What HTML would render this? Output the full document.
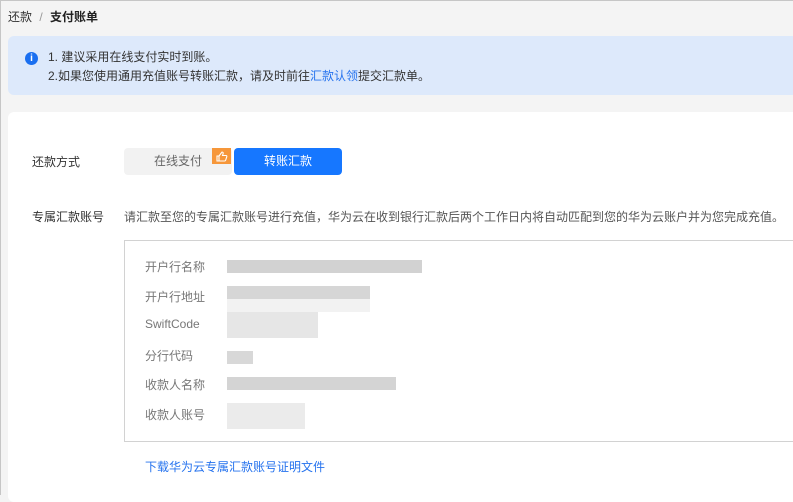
<!DOCTYPE html><html><head><meta charset="utf-8"><style>
body{margin:0;width:793px;height:495px;overflow:hidden;background:#f4f4f4;font-family:"Liberation Sans","Noto Sans CJK SC",sans-serif;position:relative}
.a{position:absolute;white-space:nowrap}
.g{position:absolute;height:13px}
</style></head><body>
<div class="a" style="left:8px;top:8px;font-size:12px;color:#333">还款 <span style="color:#999;margin:0 4px">/</span> <b style="color:#222">支付账单</b></div>
<div class="a" style="left:8px;top:36px;width:790px;height:59px;background:#dde9fb;border-radius:6px"></div>
<div class="a" style="left:25px;top:52px;width:13px;height:13px;border-radius:50%;background:#1a6ff0;color:#fff;font-size:10px;font-weight:bold;text-align:center;line-height:13px">i</div>
<div class="a" style="left:48px;top:48px;font-size:12px;color:#333;line-height:19px">1. 建议采用在线支付实时到账。<br>2.如果您使用通用充值账号转账汇款，请及时前往<span style="color:#2673ee">汇款认领</span>提交汇款单。</div>
<div class="a" style="left:8px;top:112px;width:790px;height:390px;background:#fff;border-radius:6px"></div>
<div class="a" style="left:32px;top:153px;font-size:12px;color:#333">还款方式</div>
<div class="a" style="left:124px;top:148px;width:108px;height:27px;background:#f2f2f2;border-radius:4px;font-size:12px;color:#666;text-align:center;line-height:27px">在线支付</div>
<div class="a" style="left:212px;top:148px;width:19px;height:16px;background:#f6973a"><svg width="19" height="16" viewBox="0 0 19 16"><path d="M5 8h2v5H5zM7 8l3-4c1 0 1.5.7 1 2l-.5 1.5H14c.7 0 1 .6.8 1.2l-1.2 3.6c-.2.5-.5.7-1 .7H7" fill="none" stroke="#fff" stroke-width="1.1"/></svg></div>
<div class="a" style="left:234px;top:148px;width:108px;height:27px;background:#1677ff;border-radius:4px;font-size:12px;color:#fff;text-align:center;line-height:27px">转账汇款</div>
<div class="a" style="left:32px;top:208px;font-size:12px;color:#333">专属汇款账号</div>
<div class="a" style="left:124px;top:208px;font-size:12px;color:#555">请汇款至您的专属汇款账号进行充值，华为云在收到银行汇款后两个工作日内将自动匹配到您的华为云账户并为您完成充值。</div>
<div class="a" style="left:124px;top:240px;width:680px;height:200px;border:1px solid #d2d2d2"></div>
<div class="a" style="left:145px;top:258px;font-size:12px;color:#777">开户行名称</div>
<div class="a" style="left:145px;top:288px;font-size:12px;color:#777">开户行地址</div>
<div class="a" style="left:145px;top:317px;font-size:12px;color:#777">SwiftCode</div>
<div class="a" style="left:145px;top:347px;font-size:12px;color:#777">分行代码</div>
<div class="a" style="left:145px;top:376px;font-size:12px;color:#777">收款人名称</div>
<div class="a" style="left:145px;top:406px;font-size:12px;color:#777">收款人账号</div>
<div class="g" style="left:227px;top:260px;width:195px;background:#d2d2d2"></div>
<div class="g" style="left:227px;top:286px;width:143px;background:#d6d6d6"></div>
<div class="g" style="left:227px;top:299px;width:143px;background:#f2f2f2"></div>
<div class="g" style="left:227px;top:312px;width:91px;height:26px;background:#e6e6e6"></div>
<div class="g" style="left:227px;top:351px;width:26px;background:#d8d8d8"></div>
<div class="g" style="left:227px;top:377px;width:169px;background:#d4d4d4"></div>
<div class="g" style="left:227px;top:403px;width:78px;height:26px;background:#ebebeb"></div>
<div class="a" style="left:145px;top:458px;font-size:12px;color:#2673ee">下载华为云专属汇款账号证明文件</div>
<div class="a" style="left:0;top:0;width:793px;height:1px;background:#c6c6c6"></div>
<div class="a" style="left:0;top:0;width:1px;height:495px;background:#c6c6c6"></div>
</body></html>
